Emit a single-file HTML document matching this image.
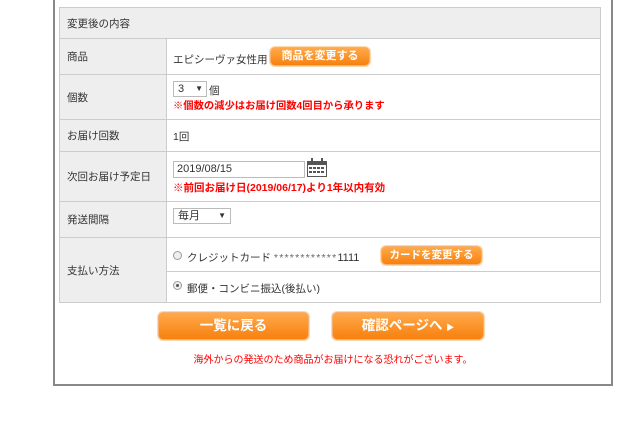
<!DOCTYPE html>
<html><head><meta charset="utf-8"><style>
*{margin:0;padding:0;box-sizing:border-box}
body{width:640px;height:424px;background:#fff;font-family:"Liberation Sans","Noto Sans CJK JP",sans-serif;font-size:10.5px;color:#333;position:relative;overflow:hidden}
.outer{position:absolute;left:53px;top:-2px;width:560px;height:388px;border:2px solid #888}
.a{position:absolute;white-space:nowrap}
.lab{position:absolute;left:59px;width:108px;background:#eee;border:1px solid #ccc;padding-left:7px;display:flex;align-items:center}
.val{position:absolute;left:166px;width:435px;border:1px solid #ccc;background:#fff}
.btn{position:absolute;background:linear-gradient(#ffa94a,#f7810f);border:1px solid #f5b070;border-radius:5px;color:#fff;font-weight:bold;text-align:center;box-shadow:0 0 0 1px #fdd9b0}
.red{color:#f00;font-weight:bold;font-size:10.5px}
.sel{position:absolute;border:1px solid #bbb;background:#fff;height:16px;font-size:11px;padding-left:4px;line-height:14px}
.radio{position:absolute;width:9px;height:9px;border:1px solid #999;border-radius:50%;background:#eee}
</style></head><body>
<div class="outer"></div>
<div class="a" style="left:59px;top:7px;width:542px;height:32px;background:#eee;border:1px solid #ccc;padding:8px 7px">変更後の内容</div>
<div class="lab" style="top:38px;height:37px">商品</div><div class="val" style="top:38px;height:37px"></div>
<div class="a" style="left:173px;top:52px">エピシーヴァ女性用</div>
<div class="btn" style="left:270px;top:47px;width:100px;height:19px;line-height:17px;font-size:11px">商品を変更する</div>
<div class="lab" style="top:74px;height:46px">個数</div><div class="val" style="top:74px;height:46px"></div>
<div class="sel" style="left:173px;top:81px;width:34px">3 <span style="float:right;margin-right:3px;font-size:8px">▼</span></div>
<div class="a" style="left:209px;top:83px">個</div>
<div class="a red" style="left:173px;top:97px;font-size:10.3px">※個数の減少はお届け回数4回目から承ります</div>
<div class="lab" style="top:119px;height:33px">お届け回数</div><div class="val" style="top:119px;height:33px"></div>
<div class="a" style="left:173px;top:129px">1回</div>
<div class="lab" style="top:151px;height:51px">次回お届け予定日</div><div class="val" style="top:151px;height:51px"></div>
<div class="a" style="left:173px;top:161px;width:132px;height:17px;border:1px solid #bbb;padding-left:3px;line-height:15px;font-size:11px">2019/08/15</div>
<svg class="a" style="left:306px;top:158px" width="22" height="20" viewBox="0 0 22 20"><rect x="1" y="3" width="20" height="16" fill="#555"/><rect x="2" y="7" width="18" height="11" fill="#fff"/><g fill="#555"><rect x="3" y="9" width="3" height="2"/><rect x="7" y="9" width="3" height="2"/><rect x="11" y="9" width="3" height="2"/><rect x="15" y="9" width="3" height="2"/><rect x="3" y="13" width="3" height="2"/><rect x="7" y="13" width="3" height="2"/><rect x="11" y="13" width="3" height="2"/><rect x="15" y="13" width="3" height="2"/><rect x="5" y="0" width="2" height="5"/><rect x="15" y="0" width="2" height="5"/></g></svg>
<div class="a red" style="left:173px;top:180px;font-size:10.5px">※前回お届け日(2019/06/17)より1年以内有効</div>
<div class="lab" style="top:201px;height:37px">発送間隔</div><div class="val" style="top:201px;height:37px"></div>
<div class="sel" style="left:173px;top:208px;width:58px">毎月 <span style="float:right;margin-right:4px;font-size:8px">▼</span></div>
<div class="lab" style="top:237px;height:66px">支払い方法</div><div class="val" style="top:237px;height:35px"></div><div class="val" style="top:271px;height:32px"></div>
<div class="radio" style="left:173px;top:251px"></div>
<div class="a" style="left:187px;top:250px">クレジットカード <span style="letter-spacing:1.2px;color:#666">************</span><span style="font-size:11px">1111</span></div>
<div class="btn" style="left:381px;top:246px;width:101px;height:19px;line-height:17px;font-size:10.5px">カードを変更する</div>
<div class="radio" style="left:173px;top:281px"><div style="width:3px;height:3px;background:#555;border-radius:50%;margin:2px"></div></div>
<div class="a" style="left:187px;top:281px">郵便・コンビニ振込(後払い)</div>
<div class="btn" style="left:158px;top:312px;width:151px;height:28px;line-height:26px;font-size:13.5px">一覧に戻る</div>
<div class="btn" style="left:332px;top:312px;width:152px;height:28px;line-height:26px;font-size:13.5px">確認ページへ <span style="font-size:8px">▶</span></div>
<div class="a" style="left:53px;width:560px;top:351px;text-align:center;color:#f00;font-size:10px">海外からの発送のため商品がお届けになる恐れがございます。</div>
</body></html>
